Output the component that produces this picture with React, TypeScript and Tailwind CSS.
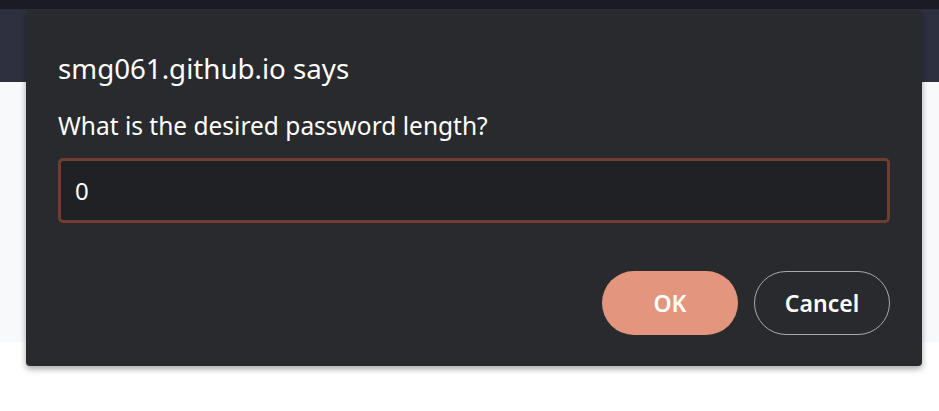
import { useState } from "react";

// Browser prompt dialog over a dimmed page
export default function App() {
  const [value, setValue] = useState("0");

  return (
    <div className="relative w-[939px] h-[411px] overflow-hidden bg-white font-['Noto_Sans',sans-serif]">
      {/* page behind the dialog */}
      <div className="h-[9px] bg-[#1a1b24]" />
      <div className="h-[73px] bg-[#2f303f]" />
      <div className="h-[260px] bg-[#f8f9fb]" />

      {/* prompt dialog */}
      <div className="absolute left-[26px] top-[10px] w-[896px] h-[356px] rounded-[4px] bg-[#292a2e] px-[32px] pt-[40px] shadow-[0_3px_6px_rgba(0,0,0,0.35)]">
        <h2 className="text-[27.7px] leading-[36px] text-white">smg061.github.io says</h2>
        <p className="mt-[24px] text-[24.5px] leading-[32px] text-white">
          What is the desired password length?
        </p>
        <input
          value={value}
          onChange={(e) => setValue(e.target.value)}
          className="mt-[16px] block w-[832px] h-[65px] rounded-[5px] border-[3px] border-[#6f3e31] bg-[#202124] px-[14px] text-[24px] text-white outline-none"
        />
        <div className="mt-[48px] flex justify-end gap-[16px]">
          <button className="w-[136px] h-[64px] rounded-full bg-[#e4957e] text-[23px] font-semibold text-white">
            OK
          </button>
          <button className="w-[136px] h-[64px] rounded-full border border-[#a8a9ad] text-[23px] font-semibold text-white">
            Cancel
          </button>
        </div>
      </div>
    </div>
  );
}
